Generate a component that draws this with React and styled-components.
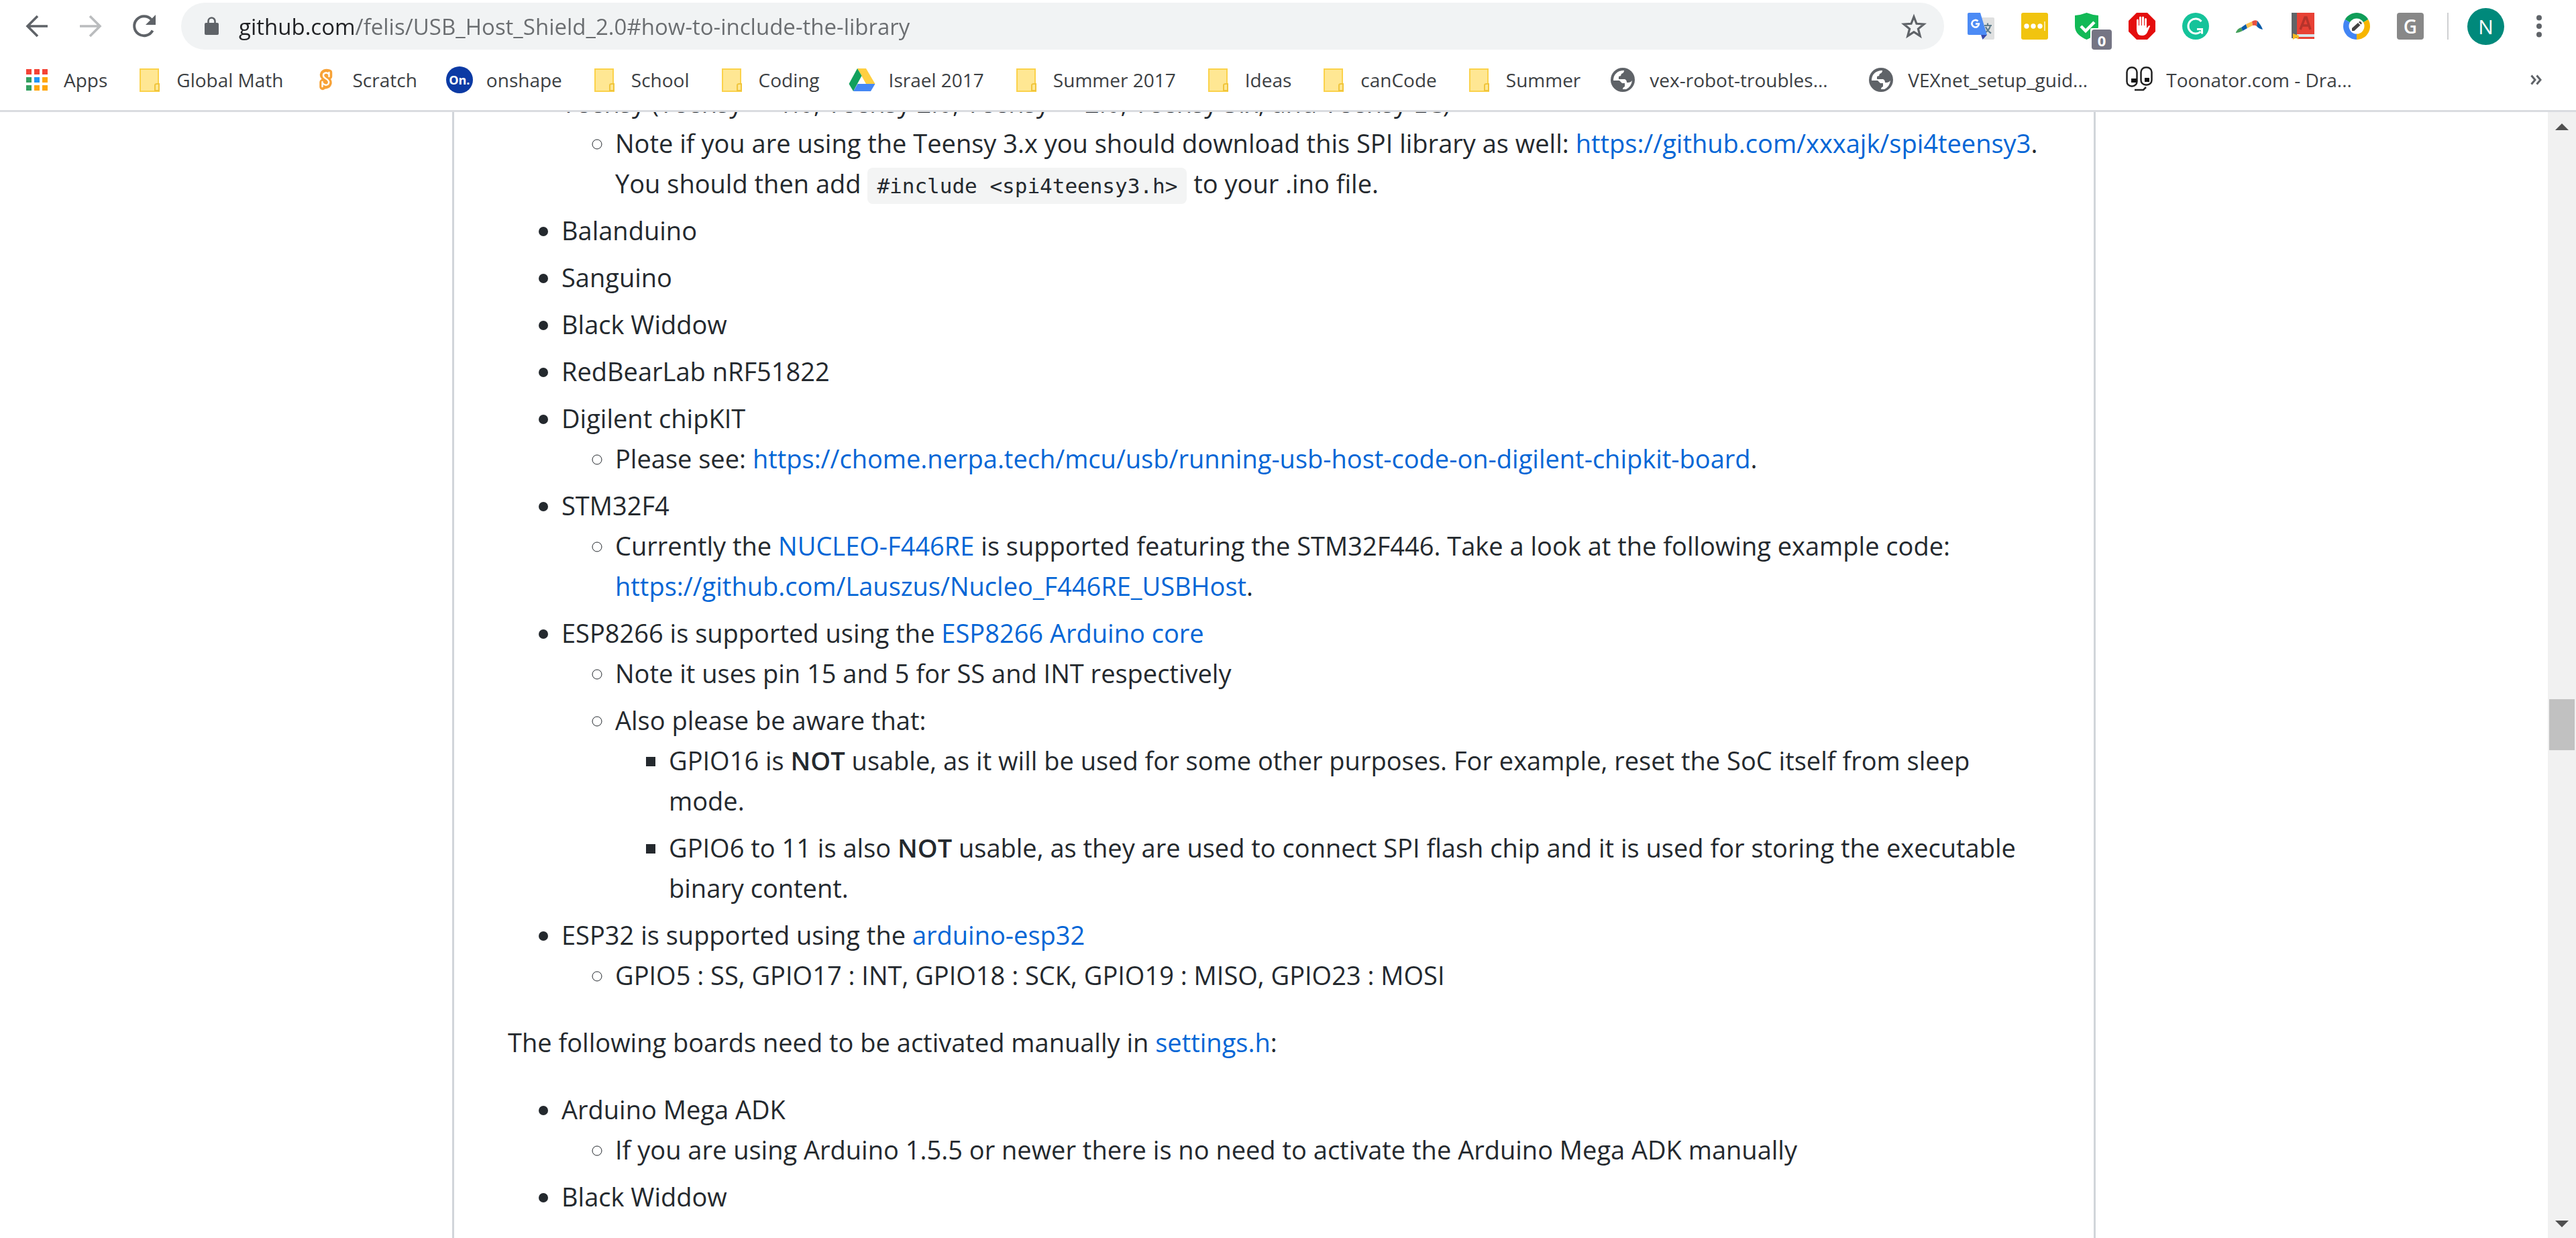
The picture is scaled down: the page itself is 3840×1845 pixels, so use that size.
import React from "react";
import styled, { createGlobalStyle } from "styled-components";

const sans = '"Open Sans", "Noto Sans", sans-serif';

const Global = createGlobalStyle`
  html, body, #root { height: 100%; margin: 0; }
  body { background: #fff; overflow: hidden; font-family: ${sans}; }
`;

const Window = styled.div`
  display: flex;
  flex-direction: column;
  height: 100vh;
`;

const Toolbar = styled.header`
  display: flex;
  align-items: center;
  height: 70px;
  padding: 4px 35px 0;
`;

const IconButton = styled.button`
  display: flex;
  align-items: center;
  justify-content: center;
  flex: none;
  position: relative;
  width: ${(p) => p.$w || 40}px;
  height: 40px;
  padding: 0;
  border: 0;
  background: none;
  font-family: ${sans};
`;

const NavGroup = styled.nav`
  display: flex;
  gap: 40px;
  margin-right: 35px;
`;

const Omnibox = styled.form`
  display: flex;
  align-items: center;
  flex: 1;
  height: 70px;
  padding: 0 25px 0 35px;
  border-radius: 35px;
  background: #f1f3f4;
`;

/* The host part of the address is darker than the path that follows it. */
const Address = styled.input`
  flex: 1;
  min-width: 0;
  height: 60px;
  margin: 0 0 0 30px;
  padding: 0;
  border: 0;
  outline: 0;
  font: 33px ${sans};
  color: #6a6d70;
  background: linear-gradient(to right, #202124 174px, #6a6d70 174px);
  background-clip: text;
  -webkit-background-clip: text;
  -webkit-text-fill-color: transparent;
`;

const Extensions = styled.div`
  display: flex;
  gap: 40px;
  margin-left: 35px;
`;

const Badge = styled.span`
  position: absolute;
  left: 25px;
  top: 25px;
  width: 30px;
  height: 30px;
  border-radius: 4px;
  background: #757584;
  color: #fff;
  font-size: 22px;
  font-weight: 700;
  line-height: 32px;
  text-align: center;
`;

const Tile = styled.span`
  width: 40px;
  height: 40px;
  border-radius: 4px;
  background: #888;
  color: #fff;
  font-size: 28px;
  font-weight: 600;
  line-height: 40px;
  text-align: center;
`;

const Divider = styled.span`
  width: 2px;
  height: 40px;
  margin: 0 28px 0 35px;
  background: #cfd0d2;
`;

const Avatar = styled.button`
  width: 55px;
  height: 55px;
  padding: 0;
  border: 0;
  border-radius: 50%;
  background: #00897b;
  color: #fff;
  font: 30px/55px ${sans};
`;

const Menu = styled(IconButton)`
  margin-left: 32px;
`;

const Bookmarks = styled.nav`
  display: flex;
  align-items: center;
  height: 90px;
  padding: 0 35px;
  border-bottom: 3px solid #dadce0;
`;

const Bookmark = styled.a`
  display: flex;
  align-items: center;
  gap: 20px;
  margin-right: 43px;
  color: #3c4043;
  font-size: 28px;
  line-height: 40px;
  text-decoration: none;
  white-space: nowrap;
`;

const Label = styled.span`
  width: ${(p) => (p.$long ? "282px" : "auto")};
`;

const Overflow = styled(IconButton)`
  margin-left: auto;
`;

const Viewport = styled.div`
  display: flex;
  flex: 1;
  min-height: 0;
`;

const Page = styled.main`
  flex: 1;
  overflow: hidden;
`;

const Readme = styled.article`
  box-sizing: border-box;
  max-width: 2450px;
  margin: -44px auto 0;
  padding: 0 80px 80px;
  border: solid #d1d5da;
  border-width: 0 3px;
  color: #24292e;
  font-size: 38px;
  line-height: 60px;
`;

const List = styled.ul`
  margin: 0 0 ${(p) => (p.$nested ? 0 : 40)}px;
  padding-left: 80px;
  list-style-type: ${(p) => p.$marker || "disc"};
`;

const Item = styled.li`
  & + & {
    margin-top: 10px;
  }
`;

const Text = styled.p`
  margin: 0 0 40px;
`;

const Link = styled.a`
  color: #0366d6;
  text-decoration: none;
`;

const Strong = styled.strong`
  font-weight: 600;
`;

const Code = styled.code`
  padding: 9px 14px;
  border-radius: 8px;
  background: #f3f4f4;
  font: 31px "DejaVu Sans Mono", monospace;
`;

const Scrollbar = styled.div`
  display: flex;
  flex-direction: column;
  align-items: center;
  width: 42px;
  background: #f1f1f1;
`;

const ScrollArrow = styled.button`
  display: flex;
  align-items: center;
  justify-content: center;
  width: 42px;
  height: 43px;
  padding: 0;
  border: 0;
  background: none;
`;

const Gutter = styled.div`
  flex: ${(p) => p.$grow};
`;

const Thumb = styled.div`
  width: 38px;
  height: 76px;
  background: #c1c1c1;
`;

const Arrow = ({ flip, color }) => (
  <svg width="34" height="34" viewBox="0 0 34 34" fill="none" stroke={color} strokeWidth="3.6" transform={flip ? "scale(-1 1)" : undefined}>
    <path d="M33 17H4M18 2L3 17l15 15" />
  </svg>
);

const Reload = () => (
  <svg width="36" height="36" viewBox="0 0 36 36">
    <path d="M30.5 24.500A14.500 14.500 0 1 1 28.500 8" fill="none" stroke="#5f6368" strokeWidth="4" />
    <path d="M35 1v15H20z" fill="#5f6368" />
  </svg>
);

const Lock = () => (
  <svg width="21" height="28" viewBox="0 0 21 28">
    <rect x="0" y="9" width="21" height="18" rx="2" fill="#5f6368" />
    <path d="M5.500 10V6.500a5 5 0 0 1 10 0V10" fill="none" stroke="#5f6368" strokeWidth="2.600" />
  </svg>
);

const Star = () => (
  <svg width="38" height="38" viewBox="0 0 38 38">
    <path d="M19 5l4 10.300 11 .7-8.600 7 2.800 10.700L19 27.700 9.800 33.700 12.600 23 4 16l11-.7z" fill="none" stroke="#5f6368" strokeWidth="3.200" />
  </svg>
);

const Translate = () => (
  <svg width="40" height="40" viewBox="0 0 40 40">
    <path d="M14 7h24a2 2 0 0 1 2 2v29a2 2 0 0 1-2 2H24z" fill="#dfe0e0" />
    <path d="M25 19h11M30 15.500v3.500M34 19c-1 5-4 8.500-9 11.500M27 21c2 4.500 4 7 8 9.500" stroke="#607d8b" strokeWidth="2.200" fill="none" />
    <path d="M20 33h9l-6.500 7z" fill="#3749ab" />
    <path d="M2 0h17l10 33H2a2 2 0 0 1-2-2V2a2 2 0 0 1 2-2z" fill="#4c8bf5" />
    <path d="M15.500 12.500a5.300 5.300 0 1 0 1.500 4h-5" stroke="#fff" strokeWidth="2.600" fill="none" />
  </svg>
);

const Dots = () => (
  <svg width="40" height="40" viewBox="0 0 40 40">
    <rect width="40" height="40" rx="3" fill="#f1c40f" />
    <circle cx="8" cy="20" r="3.700" fill="#fff" />
    <circle cx="18" cy="20" r="3.700" fill="#fff" />
    <circle cx="28" cy="20" r="3.700" fill="#fff" />
    <path d="M35 13v14" stroke="#fbe9a6" strokeWidth="2" />
  </svg>
);

const Shield = () => (
  <svg width="40" height="40" viewBox="0 0 40 40">
    <path d="M0 4Q10 3 17.500 0 25 3 35 4v16c0 10-8 16-17.500 20C8 36 0 30 0 20z" fill="#12b956" />
    <path d="M9 20l7 7 13-13" stroke="#fff" strokeWidth="4.500" fill="none" />
    <path d="M23 40V25q0-2 2-2h15v17z" fill="#fff" />
  </svg>
);

const Hand = () => (
  <svg width="40" height="40" viewBox="0 0 40 40">
    <path d="M12 0h16l12 12v16L28 40H12L0 28V12z" fill="#e40d0d" />
    <g stroke="#fff" strokeWidth="3" strokeLinecap="round">
      <path d="M13.500 11v12M17.500 7v15M21.500 7v15M25.500 9.500v14" />
    </g>
    <path d="M12 19h15v4l3-3.500q2-1 2 .5l-4 9q-2 5-8 5-8 0-8-10z" fill="#fff" />
  </svg>
);

const Grammar = () => (
  <svg width="40" height="40" viewBox="0 0 40 40">
    <circle cx="20" cy="20" r="20" fill="#15c39a" />
    <path d="M28.500 13a11 11 0 1 0-1 15" fill="none" stroke="#fff" strokeWidth="3" />
    <path d="M22 24.500h7.500v7" fill="none" stroke="#fff" strokeWidth="3" />
  </svg>
);

const Boomerang = () => (
  <svg width="40" height="40" viewBox="0 0 40 40">
    <path d="M0 29q3-6 8-7l2 5Q4 30 0 30z" fill="#43a05a" />
    <path d="M8 22l7-5 2 6-7 4z" fill="#0a5ba8" />
    <path d="M15 17l9-4 1 6-8 4z" fill="#fbc04d" />
    <path d="M24 13q4-3 8-1l-1 8q-3-2-6-1z" fill="#e8503f" />
    <path d="M32 12q6 7 8 13-6-1-9-5z" fill="#0a5ba8" />
  </svg>
);

const Book = () => (
  <svg width="40" height="40" viewBox="0 0 40 40">
    <path d="M3 0h8v38H3z" fill="#606468" />
    <path d="M11 0h26v32H11z" fill="#e84135" />
    <path d="M16 25l7-18h2l6 18M19 19h10" fill="none" stroke="#b5332b" strokeWidth="3.500" />
    <path d="M11 32h26v7H11z" fill="#d8e8ec" />
    <path d="M13 36h24v3H13z" fill="#e84135" />
    <path d="M5 31l9 3-1 6-3-3-5 3z" fill="#f5b921" />
  </svg>
);

const Ring = () => (
  <svg width="40" height="40" viewBox="0 0 40 40">
    <path d="M20 20V40A20 20 0 0 1 2.700 10z" fill="#4285f4" />
    <path d="M20 20L2.700 10A20 20 0 0 1 37.300 10z" fill="#0f9d58" />
    <path d="M20 20L37.300 10A20 20 0 0 1 20 40z" fill="#f7b500" />
    <circle cx="20" cy="20" r="11.500" fill="#fff" />
    <path d="M13 23l9-8 3.500 3.500-9 8.500H13zM23 14l2-1.500 3 3-1.500 2z" fill="#444" />
  </svg>
);

const More = () => (
  <svg width="10" height="34" viewBox="0 0 10 34" fill="#5f6368">
    <circle cx="5" cy="4.500" r="4" />
    <circle cx="5" cy="17" r="4" />
    <circle cx="5" cy="29.500" r="4" />
  </svg>
);

const Chevrons = () => (
  <svg width="18" height="16" viewBox="0 0 18 16" fill="none" stroke="#5f6368" strokeWidth="3">
    <path d="M1.500 1.500L7 8l-5.500 6.500M9.500 1.500L15 8l-5.500 6.500" />
  </svg>
);

const AppsIcon = () => {
  const colors = ["#f44336", "#f44336", "#f44336", "#34a060", "#2196f3", "#ffa60a", "#34a060", "#ffa60a", "#ffa60a"];
  return (
    <svg width="40" height="40" viewBox="0 0 40 40">
      {colors.map((c, i) => (
        <rect key={i} x={4 + (i % 3) * 12} y={4 + Math.floor(i / 3) * 12} width="8" height="8" fill={c} />
      ))}
    </svg>
  );
};

const Folder = () => (
  <svg width="40" height="40" viewBox="0 0 40 40">
    <path d="M6 4h27v23l1 1v9H6z" fill="#ffe793" stroke="#fbd24b" strokeWidth="2" />
    <path d="M28 36v-8q0-2 3-2h3v10z" fill="#ffe793" stroke="#f0c53c" strokeWidth="2" />
  </svg>
);

const Scratch = () => (
  <svg width="40" height="40" viewBox="0 0 40 40" fill="none" strokeLinecap="round" strokeLinejoin="round">
    <path d="M24.500 15V9q-8-2-9 3.500c0 5 9 6 8.500 12-1 5-7 5-9 3v-4 7" stroke="#f7a237" strokeWidth="9.500" />
    <path d="M24.500 15V9M24.500 12q-2-3-5-2.500c-5 1-4.500 6 0 8.500 5 2.500 6 6 3 9q-4 2-7.500-2M14.500 23v7" stroke="#fff" strokeWidth="2.400" />
  </svg>
);

const OnBadge = styled.span`
  width: 40px;
  height: 40px;
  border-radius: 50%;
  background: #0c3aa4;
  color: #fff;
  font-size: 18px;
  font-weight: 700;
  line-height: 40px;
  text-align: center;
`;

const Drive = () => (
  <svg width="40" height="40" viewBox="0 0 40 40">
    <path d="M13 3h13l13.500 23H26z" fill="#ffcf40" />
    <path d="M13 3l6.500 11L7 37 0.500 26z" fill="#11a05e" />
    <path d="M13.500 26h26L33 37H7z" fill="#4587f4" />
  </svg>
);

const Globe = () => (
  <svg width="40" height="40" viewBox="0 0 40 40">
    <circle cx="20" cy="20" r="18" fill="#5f6368" />
    <path d="M6 21C6 12 12 6 22 6q0 4-4 5l-1 3-3 1v4h9q3 1 3 5h3q3 0 5-3-1 9-9 13h-5q0-3 3-4v-5h-4l-4-4z" fill="#fff" />
  </svg>
);

const Eyes = () => (
  <svg width="40" height="40" viewBox="0 0 40 40" fill="none" stroke="#222" strokeWidth="2.500">
    <rect x="1.500" y="1.500" width="15" height="28" rx="7" />
    <rect x="22.500" y="1.500" width="16" height="26" rx="7" />
    <path d="M8 18h8v6h-8zM28 17h7v6h-7z" fill="#111" stroke="none" />
    <path d="M13 35h13l4-4" />
  </svg>
);

const Triangle = ({ down }) => (
  <svg width="20" height="10" viewBox="0 0 20 10">
    <path d={down ? "M0 0h20L10 10z" : "M0 10h20L10 0z"} fill="#505050" />
  </svg>
);

const bookmarks = [
  ["Apps", AppsIcon],
  ["Global Math", Folder],
  ["Scratch", Scratch],
  ["onshape", () => <OnBadge>On.</OnBadge>],
  ["School", Folder],
  ["Coding", Folder],
  ["Israel 2017", Drive],
  ["Summer 2017", Folder],
  ["Ideas", Folder],
  ["canCode", Folder],
  ["Summer", Folder],
  ["vex-robot-troubles...", Globe, true],
  ["VEXnet_setup_guid...", Globe, true],
  ["Toonator.com - Dra...", Eyes, true],
];

const extensions = [
  ["Translate", Translate],
  ["Passwords", Dots],
  ["Protection", Shield, "0"],
  ["Blocker", Hand],
  ["Grammar", Grammar],
  ["Boomerang", Boomerang],
  ["Dictionary", Book],
  ["Color picker", Ring],
  ["G", () => <Tile>G</Tile>],
];

export default function App() {
  return (
    <Window>
      <Global />
      <Toolbar>
        <NavGroup>
          <IconButton aria-label="Back"><Arrow color="#5f6368" /></IconButton>
          <IconButton aria-label="Forward"><Arrow flip color="#babcbe" /></IconButton>
          <IconButton aria-label="Reload"><Reload /></IconButton>
        </NavGroup>
        <Omnibox>
          <Lock />
          <Address aria-label="Address" spellCheck={false} defaultValue="github.com/felis/USB_Host_Shield_2.0#how-to-include-the-library" />
          <IconButton type="button" aria-label="Bookmark this page"><Star /></IconButton>
        </Omnibox>
        <Extensions>
          {extensions.map(([name, Icon, count]) => (
            <IconButton key={name} aria-label={name}>
              <Icon />
              {count && <Badge>{count}</Badge>}
            </IconButton>
          ))}
        </Extensions>
        <Divider />
        <Avatar>N</Avatar>
        <Menu aria-label="Menu"><More /></Menu>
      </Toolbar>
      <Bookmarks>
        {bookmarks.map(([name, Icon, long]) => (
          <Bookmark key={name} href="#">
            <Icon />
            <Label $long={long}>{name}</Label>
          </Bookmark>
        ))}
        <Overflow $w={48} aria-label="More bookmarks"><Chevrons /></Overflow>
      </Bookmarks>
      <Viewport>
        <Page>
          <Readme>
            <List>
              <Item>
                Teensy (Teensy++ 1.0, Teensy 2.0, Teensy++ 2.0, Teensy 3.x, and Teensy LC)
                <List $nested $marker="circle">
                  <Item>
                    Note if you are using the Teensy 3.x you should download this SPI library as well: <Link href="#">https://github.com/xxxajk/spi4teensy3</Link>.<br />
                    You should then add <Code>#include &lt;spi4teensy3.h&gt;</Code> to your .ino file.
                  </Item>
                </List>
              </Item>
              <Item>Balanduino</Item>
              <Item>Sanguino</Item>
              <Item>Black Widdow</Item>
              <Item>RedBearLab nRF51822</Item>
              <Item>
                Digilent chipKIT
                <List $nested $marker="circle">
                  <Item>
                    Please see: <Link href="#">https://chome.nerpa.tech/mcu/usb/running-usb-host-code-on-digilent-chipkit-board</Link>.
                  </Item>
                </List>
              </Item>
              <Item>
                STM32F4
                <List $nested $marker="circle">
                  <Item>
                    Currently the <Link href="#">NUCLEO-F446RE</Link> is supported featuring the STM32F446. Take a look at the following example code:<br />
                    <Link href="#">https://github.com/Lauszus/Nucleo_F446RE_USBHost</Link>.
                  </Item>
                </List>
              </Item>
              <Item>
                ESP8266 is supported using the <Link href="#">ESP8266 Arduino core</Link>
                <List $nested $marker="circle">
                  <Item>Note it uses pin 15 and 5 for SS and INT respectively</Item>
                  <Item>
                    Also please be aware that:
                    <List $nested $marker="square">
                      <Item>
                        GPIO16 is <Strong>NOT</Strong> usable, as it will be used for some other purposes. For example, reset the SoC itself from sleep<br />
                        mode.
                      </Item>
                      <Item>
                        GPIO6 to 11 is also <Strong>NOT</Strong> usable, as they are used to connect SPI flash chip and it is used for storing the executable<br />
                        binary content.
                      </Item>
                    </List>
                  </Item>
                </List>
              </Item>
              <Item>
                ESP32 is supported using the <Link href="#">arduino-esp32</Link>
                <List $nested $marker="circle">
                  <Item>GPIO5 : SS, GPIO17 : INT, GPIO18 : SCK, GPIO19 : MISO, GPIO23 : MOSI</Item>
                </List>
              </Item>
            </List>
            <Text>
              The following boards need to be activated manually in <Link href="#">settings.h</Link>:
            </Text>
            <List>
              <Item>
                Arduino Mega ADK
                <List $nested $marker="circle">
                  <Item>If you are using Arduino 1.5.5 or newer there is no need to activate the Arduino Mega ADK manually</Item>
                </List>
              </Item>
              <Item>Black Widdow</Item>
            </List>
          </Readme>
        </Page>
        <Scrollbar>
          <ScrollArrow aria-label="Scroll up"><Triangle /></ScrollArrow>
          <Gutter $grow={833} />
          <Thumb />
          <Gutter $grow={685} />
          <ScrollArrow aria-label="Scroll down"><Triangle down /></ScrollArrow>
        </Scrollbar>
      </Viewport>
    </Window>
  );
}
